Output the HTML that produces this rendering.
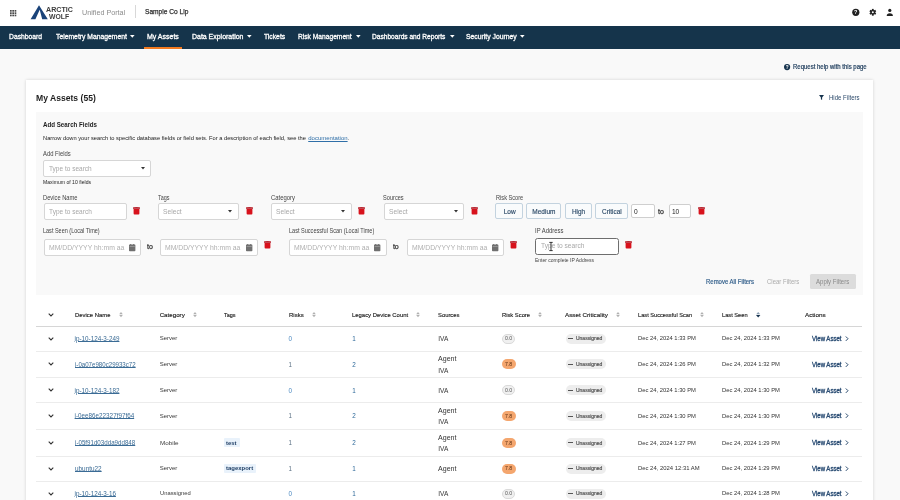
<!DOCTYPE html>
<html><head><meta charset="utf-8"><style>
html,body{margin:0;padding:0;width:900px;height:500px;overflow:hidden;background:#f9f9f9}
body{position:relative;font-family:"Liberation Sans",sans-serif}
span{position:absolute;white-space:pre;line-height:normal;transform-origin:0 0}
svg{overflow:visible}
.wrap{position:absolute;left:0;top:0;width:900px;height:500px;overflow:hidden;filter:blur(0.3px)}
</style></head><body><div class="wrap">
<div style="position:absolute;left:0px;top:0px;width:900px;height:26px;background:#fff"></div>
<div style="position:absolute;left:0px;top:26px;width:900px;height:23px;background:#15344b"></div>
<div style="position:absolute;left:134.6px;top:5.4px;width:1px;height:12.5px;background:#d8d8d8"></div>
<div style="position:absolute;left:144px;top:47px;width:38px;height:2px;background:#f47b20"></div>
<div style="position:absolute;left:26px;top:79.5px;width:847px;height:430px;background:#fff;box-shadow:0 0 3px rgba(0,0,0,0.16)"></div>
<div style="position:absolute;left:36px;top:111.8px;width:826.7px;height:183.2px;background:#f9f9f9"></div>
<div style="position:absolute;left:43px;top:160px;width:108.3px;height:17px;box-sizing:border-box;background:#fff;border:0.8px solid #d6d6d6;border-radius:2px"></div>
<div style="position:absolute;left:43.8px;top:203.3px;width:83.2px;height:16.6px;box-sizing:border-box;background:#fff;border:0.8px solid #d6d6d6;border-radius:2px"></div>
<div style="position:absolute;left:158.2px;top:203.3px;width:81.3px;height:16.6px;box-sizing:border-box;background:#fff;border:0.8px solid #d6d6d6;border-radius:2px"></div>
<div style="position:absolute;left:270.9px;top:203.3px;width:81.3px;height:16.6px;box-sizing:border-box;background:#fff;border:0.8px solid #d6d6d6;border-radius:2px"></div>
<div style="position:absolute;left:383.7px;top:203.3px;width:80.8px;height:16.6px;box-sizing:border-box;background:#fff;border:0.8px solid #d6d6d6;border-radius:2px"></div>
<div style="position:absolute;left:495.4px;top:203.3px;width:27.6px;height:15.3px;box-sizing:border-box;background:#f9fbfc;border:0.9px solid #c3d3df;border-radius:2px"></div>
<div style="position:absolute;left:526.4px;top:203.3px;width:35.1px;height:15.3px;box-sizing:border-box;background:#f9fbfc;border:0.9px solid #c3d3df;border-radius:2px"></div>
<div style="position:absolute;left:564.7px;top:203.3px;width:27.2px;height:15.3px;box-sizing:border-box;background:#f9fbfc;border:0.9px solid #c3d3df;border-radius:2px"></div>
<div style="position:absolute;left:595.3px;top:203.3px;width:32.6px;height:15.3px;box-sizing:border-box;background:#f9fbfc;border:0.9px solid #c3d3df;border-radius:2px"></div>
<div style="position:absolute;left:631px;top:204px;width:24.3px;height:13.6px;box-sizing:border-box;background:#fff;border:0.8px solid #cfcfcf;border-radius:2px"></div>
<div style="position:absolute;left:668.7px;top:204px;width:22.6px;height:13.6px;box-sizing:border-box;background:#fff;border:0.8px solid #cfcfcf;border-radius:2px"></div>
<div style="position:absolute;left:43.8px;top:238.8px;width:97.3px;height:17.1px;box-sizing:border-box;background:#fff;border:0.8px solid #d6d6d6;border-radius:2px"></div>
<div style="position:absolute;left:160.3px;top:238.8px;width:97.9px;height:17.1px;box-sizing:border-box;background:#fff;border:0.8px solid #d6d6d6;border-radius:2px"></div>
<div style="position:absolute;left:289.3px;top:238.8px;width:97.4px;height:17.1px;box-sizing:border-box;background:#fff;border:0.8px solid #d6d6d6;border-radius:2px"></div>
<div style="position:absolute;left:406.7px;top:238.8px;width:97.3px;height:17.1px;box-sizing:border-box;background:#fff;border:0.8px solid #d6d6d6;border-radius:2px"></div>
<div style="position:absolute;left:535px;top:237.5px;width:84px;height:17.0px;box-sizing:border-box;background:#fff;border:1.2px solid #6e6e6e;border-radius:2.5px"></div>
<div style="position:absolute;left:809.6px;top:274px;width:46px;height:15px;background:#dcdcdc;border-radius:1.5px"></div>
<div style="position:absolute;left:36px;top:325.8px;width:826px;height:1px;background:#d6d6d6"></div>
<div style="position:absolute;left:36px;top:350.5px;width:826px;height:1px;background:#ececec"></div>
<div style="position:absolute;left:502.3px;top:333.65px;width:13.2px;height:10px;box-sizing:border-box;background:#f0f0f0;border:0.6px solid #dadada;border-radius:5px"></div>
<div style="position:absolute;left:566px;top:333.65px;width:39.6px;height:10px;background:#ededed;border-radius:5px"></div>
<div style="position:absolute;left:568.2px;top:338.25px;width:5px;height:0.9px;background:#555"></div>
<div style="position:absolute;left:36px;top:377.4px;width:826px;height:1px;background:#ececec"></div>
<div style="position:absolute;left:502px;top:359.45px;width:14px;height:10px;background:#f4a66e;border-radius:5px"></div>
<div style="position:absolute;left:566px;top:359.45px;width:39.6px;height:10px;background:#ededed;border-radius:5px"></div>
<div style="position:absolute;left:568.2px;top:364.05px;width:5px;height:0.9px;background:#555"></div>
<div style="position:absolute;left:36px;top:402.2px;width:826px;height:1px;background:#ececec"></div>
<div style="position:absolute;left:502.3px;top:385.29999999999995px;width:13.2px;height:10px;box-sizing:border-box;background:#f0f0f0;border:0.6px solid #dadada;border-radius:5px"></div>
<div style="position:absolute;left:566px;top:385.29999999999995px;width:39.6px;height:10px;background:#ededed;border-radius:5px"></div>
<div style="position:absolute;left:568.2px;top:389.9px;width:5px;height:0.9px;background:#555"></div>
<div style="position:absolute;left:36px;top:428.8px;width:826px;height:1px;background:#ececec"></div>
<div style="position:absolute;left:502px;top:411.0px;width:14px;height:10px;background:#f4a66e;border-radius:5px"></div>
<div style="position:absolute;left:566px;top:411.0px;width:39.6px;height:10px;background:#ededed;border-radius:5px"></div>
<div style="position:absolute;left:568.2px;top:415.6px;width:5px;height:0.9px;background:#555"></div>
<div style="position:absolute;left:36px;top:455.8px;width:826px;height:1px;background:#ececec"></div>
<div style="position:absolute;left:223.5px;top:438.2px;width:16px;height:9.2px;background:#e9f2fb;border-radius:1px"></div>
<div style="position:absolute;left:502px;top:437.8px;width:14px;height:10px;background:#f4a66e;border-radius:5px"></div>
<div style="position:absolute;left:566px;top:437.8px;width:39.6px;height:10px;background:#ededed;border-radius:5px"></div>
<div style="position:absolute;left:568.2px;top:442.40000000000003px;width:5px;height:0.9px;background:#555"></div>
<div style="position:absolute;left:36px;top:480.5px;width:826px;height:1px;background:#ececec"></div>
<div style="position:absolute;left:223.5px;top:464.04999999999995px;width:32.7px;height:9.2px;background:#e9f2fb;border-radius:1px"></div>
<div style="position:absolute;left:502px;top:463.65px;width:14px;height:10px;background:#f4a66e;border-radius:5px"></div>
<div style="position:absolute;left:566px;top:463.65px;width:39.6px;height:10px;background:#ededed;border-radius:5px"></div>
<div style="position:absolute;left:568.2px;top:468.25px;width:5px;height:0.9px;background:#555"></div>
<div style="position:absolute;left:502.3px;top:488.5px;width:13.2px;height:10px;box-sizing:border-box;background:#f0f0f0;border:0.6px solid #dadada;border-radius:5px"></div>
<div style="position:absolute;left:566px;top:488.5px;width:39.6px;height:10px;background:#ededed;border-radius:5px"></div>
<div style="position:absolute;left:568.2px;top:493.1px;width:5px;height:0.9px;background:#555"></div>
<span style="left:45.57px;top:5px;font-size:7.2px;font-weight:700;color:#3d3d3d;transform:scaleX(0.988);">ARCTIC</span>
<span style="left:49.47px;top:12px;font-size:7.2px;font-weight:700;color:#3d3d3d;transform:scaleX(0.951);">WOLF</span>
<span style="left:82.12px;top:8px;font-size:8px;font-weight:400;color:#8c8c8c;transform:scaleX(0.899);">Unified Portal</span>
<span style="left:144.74px;top:7px;font-size:7.6px;font-weight:400;color:#2b2b2b;transform:scaleX(0.870);-webkit-text-stroke:0.25px #2b2b2b">Sample Co Llp</span>
<span style="left:9.16px;top:32px;font-size:7.3px;font-weight:400;color:#fff;transform:scaleX(0.928);-webkit-text-stroke:0.3px #fff">Dashboard</span>
<span style="left:55.56px;top:32px;font-size:7.3px;font-weight:400;color:#fff;transform:scaleX(0.930);-webkit-text-stroke:0.3px #fff">Telemetry Management</span>
<span style="left:147.16px;top:32px;font-size:7.3px;font-weight:400;color:#fff;transform:scaleX(0.957);-webkit-text-stroke:0.3px #fff">My Assets</span>
<span style="left:191.76px;top:32px;font-size:7.3px;font-weight:400;color:#fff;transform:scaleX(0.953);-webkit-text-stroke:0.3px #fff">Data Exploration</span>
<span style="left:263.56px;top:32px;font-size:7.3px;font-weight:400;color:#fff;transform:scaleX(0.925);-webkit-text-stroke:0.3px #fff">Tickets</span>
<span style="left:298.46px;top:32px;font-size:7.3px;font-weight:400;color:#fff;transform:scaleX(0.912);-webkit-text-stroke:0.3px #fff">Risk Management</span>
<span style="left:372.46px;top:32px;font-size:7.3px;font-weight:400;color:#fff;transform:scaleX(0.905);-webkit-text-stroke:0.3px #fff">Dashboards and Reports</span>
<span style="left:466.26px;top:32px;font-size:7.3px;font-weight:400;color:#fff;transform:scaleX(0.933);-webkit-text-stroke:0.3px #fff">Security Journey</span>
<span style="left:792.62px;top:63px;font-size:6.3px;font-weight:400;color:#1b3a5a;transform:scaleX(0.952);-webkit-text-stroke:0.2px #1b3a5a">Request help with this page</span>
<span style="left:36.38px;top:93px;font-size:8.7px;font-weight:700;color:#1e1e1e;transform:scaleX(0.988);">My Assets (55)</span>
<span style="left:828.91px;top:94px;font-size:6.5px;font-weight:400;color:#2c4a6b;transform:scaleX(0.929);">Hide Filters</span>
<span style="left:43.37px;top:120px;font-size:7.2px;font-weight:700;color:#1e1e1e;transform:scaleX(0.860);">Add Search Fields</span>
<span style="left:42.94px;top:135px;font-size:6.0px;font-weight:400;color:#1a1a1a;transform:scaleX(0.952);">Narrow down your search to specific database fields or field sets. For a description of each field, see the </span>
<span style="left:308.24px;top:135px;font-size:6.0px;font-weight:400;color:#2f6fa8;text-decoration:underline">documentation</span>
<span style="left:347.44px;top:135px;font-size:6.0px;font-weight:400;color:#1a1a1a;">.</span>
<span style="left:42.91px;top:150px;font-size:6.5px;font-weight:400;color:#444;transform:scaleX(0.900);">Add Fields</span>
<span style="left:49.28px;top:165px;font-size:7px;font-weight:400;color:#a8a8a8;transform:scaleX(0.930);">Type to search</span>
<span style="left:42.98px;top:179px;font-size:5.4px;font-weight:400;color:#222;transform:scaleX(0.943);">Maximum of 10 fields</span>
<span style="left:43.41px;top:194px;font-size:6.5px;font-weight:400;color:#444;transform:scaleX(0.886);">Device Name</span>
<span style="left:157.81px;top:194px;font-size:6.5px;font-weight:400;color:#444;transform:scaleX(0.834);">Tags</span>
<span style="left:270.51px;top:194px;font-size:6.5px;font-weight:400;color:#444;transform:scaleX(0.912);">Category</span>
<span style="left:383.31px;top:194px;font-size:6.5px;font-weight:400;color:#444;transform:scaleX(0.865);">Sources</span>
<span style="left:495.51px;top:194px;font-size:6.5px;font-weight:400;color:#444;transform:scaleX(0.867);">Risk Score</span>
<span style="left:49.28px;top:208px;font-size:7px;font-weight:400;color:#a8a8a8;transform:scaleX(0.932);">Type to search</span>
<span style="left:163.38px;top:208px;font-size:7px;font-weight:400;color:#a8a8a8;transform:scaleX(0.955);">Select</span>
<span style="left:276.08px;top:208px;font-size:7px;font-weight:400;color:#a8a8a8;transform:scaleX(0.955);">Select</span>
<span style="left:388.88px;top:208px;font-size:7px;font-weight:400;color:#a8a8a8;transform:scaleX(0.955);">Select</span>
<span style="left:503.71px;top:208px;font-size:6.5px;font-weight:400;color:#2d4b68;-webkit-text-stroke:0.15px #2d4b68">Low</span>
<span style="left:532.31px;top:208px;font-size:6.5px;font-weight:400;color:#2d4b68;-webkit-text-stroke:0.15px #2d4b68">Medium</span>
<span style="left:571.66px;top:208px;font-size:6.5px;font-weight:400;color:#2d4b68;transform:scaleX(0.983);-webkit-text-stroke:0.15px #2d4b68">High</span>
<span style="left:601.71px;top:208px;font-size:6.5px;font-weight:400;color:#2d4b68;transform:scaleX(0.989);-webkit-text-stroke:0.15px #2d4b68">Critical</span>
<span style="left:634.10px;top:208px;font-size:6.6px;font-weight:400;color:#222;">0</span>
<span style="left:658.08px;top:208px;font-size:7px;font-weight:400;color:#333;-webkit-text-stroke:0.25px #333">to</span>
<span style="left:671.90px;top:208px;font-size:6.6px;font-weight:400;color:#222;">10</span>
<span style="left:43.41px;top:227px;font-size:6.5px;font-weight:400;color:#444;transform:scaleX(0.847);">Last Seen (Local Time)</span>
<span style="left:288.91px;top:227px;font-size:6.5px;font-weight:400;color:#444;transform:scaleX(0.855);">Last Successful Scan (Local Time)</span>
<span style="left:534.91px;top:227px;font-size:6.5px;font-weight:400;color:#444;transform:scaleX(0.905);">IP Address</span>
<span style="left:48.70px;top:244px;font-size:6.6px;font-weight:400;color:#b0b0b0;transform:scaleX(1.035);">MM/DD/YYYY hh:mm aa</span>
<span style="left:165.20px;top:244px;font-size:6.6px;font-weight:400;color:#b0b0b0;transform:scaleX(1.035);">MM/DD/YYYY hh:mm aa</span>
<span style="left:294.20px;top:244px;font-size:6.6px;font-weight:400;color:#b0b0b0;transform:scaleX(1.035);">MM/DD/YYYY hh:mm aa</span>
<span style="left:411.60px;top:244px;font-size:6.6px;font-weight:400;color:#b0b0b0;transform:scaleX(1.035);">MM/DD/YYYY hh:mm aa</span>
<span style="left:147.08px;top:243px;font-size:7px;font-weight:400;color:#333;-webkit-text-stroke:0.25px #333">to</span>
<span style="left:392.88px;top:243px;font-size:7px;font-weight:400;color:#333;-webkit-text-stroke:0.25px #333">to</span>
<span style="left:540.89px;top:242px;font-size:6.8px;font-weight:400;color:#a8a8a8;transform:scaleX(0.973);">Type to search</span>
<span style="left:535.00px;top:257px;font-size:5px;font-weight:400;color:#444;">Enter complete IP Address</span>
<span style="left:706.19px;top:278px;font-size:6.8px;font-weight:400;color:#36628d;transform:scaleX(0.878);-webkit-text-stroke:0.2px #36628d">Remove All Filters</span>
<span style="left:767.00px;top:278px;font-size:6.6px;font-weight:400;color:#ababab;transform:scaleX(0.908);">Clear Filters</span>
<span style="left:816.00px;top:278px;font-size:6.6px;font-weight:400;color:#8a8a8a;transform:scaleX(0.917);">Apply Filters</span>
<span style="left:74.83px;top:311px;font-size:6.2px;font-weight:400;color:#222;transform:scaleX(0.959);-webkit-text-stroke:0.15px #222">Device Name</span>
<span style="left:159.63px;top:311px;font-size:6.2px;font-weight:400;color:#222;-webkit-text-stroke:0.15px #222">Category</span>
<span style="left:223.53px;top:311px;font-size:6.2px;font-weight:400;color:#222;transform:scaleX(0.889);-webkit-text-stroke:0.15px #222">Tags</span>
<span style="left:288.63px;top:311px;font-size:6.2px;font-weight:400;color:#222;transform:scaleX(0.967);-webkit-text-stroke:0.15px #222">Risks</span>
<span style="left:352.23px;top:311px;font-size:6.2px;font-weight:400;color:#222;transform:scaleX(0.954);-webkit-text-stroke:0.15px #222">Legacy Device Count</span>
<span style="left:438.33px;top:311px;font-size:6.2px;font-weight:400;color:#222;transform:scaleX(0.943);-webkit-text-stroke:0.15px #222">Sources</span>
<span style="left:501.83px;top:311px;font-size:6.2px;font-weight:400;color:#222;transform:scaleX(0.936);-webkit-text-stroke:0.15px #222">Risk Score</span>
<span style="left:565.43px;top:311px;font-size:6.2px;font-weight:400;color:#222;transform:scaleX(1.015);-webkit-text-stroke:0.15px #222">Asset Criticality</span>
<span style="left:638.33px;top:311px;font-size:6.2px;font-weight:400;color:#222;transform:scaleX(0.915);-webkit-text-stroke:0.15px #222">Last Successful Scan</span>
<span style="left:722.23px;top:311px;font-size:6.2px;font-weight:400;color:#222;transform:scaleX(0.919);-webkit-text-stroke:0.15px #222">Last Seen</span>
<span style="left:804.63px;top:311px;font-size:6.2px;font-weight:400;color:#222;transform:scaleX(1.016);-webkit-text-stroke:0.15px #222">Actions</span>
<span style="left:74.62px;top:335px;font-size:6.3px;font-weight:400;color:#3a6b95;text-decoration:underline;text-decoration-thickness:0.5px;text-underline-offset:0.4px">ip-10-124-3-249</span>
<span style="left:159.64px;top:335px;font-size:6.0px;font-weight:400;color:#3a3a3a;">Server</span>
<span style="left:288.62px;top:335px;font-size:6.3px;font-weight:400;color:#4a88c0;">0</span>
<span style="left:352.22px;top:335px;font-size:6.3px;font-weight:400;color:#2f6a9a;">1</span>
<span style="left:438.31px;top:335px;font-size:6.5px;font-weight:400;color:#333;">IVA</span>
<span style="left:504.89px;top:335px;font-size:5.2px;font-weight:400;color:#555;">0.0</span>
<span style="left:576.28px;top:335px;font-size:5.4px;font-weight:400;color:#555;transform:scaleX(0.925);-webkit-text-stroke:0.2px #555">Unassigned</span>
<span style="left:638.34px;top:335px;font-size:6.0px;font-weight:400;color:#333;transform:scaleX(0.971);">Dec 24, 2024 1:33 PM</span>
<span style="left:722.24px;top:335px;font-size:6.0px;font-weight:400;color:#333;transform:scaleX(0.971);">Dec 24, 2024 1:33 PM</span>
<span style="left:811.70px;top:335px;font-size:6.6px;font-weight:400;color:#254870;transform:scaleX(0.917);-webkit-text-stroke:0.3px #254870">View Asset</span>
<span style="left:74.62px;top:361px;font-size:6.3px;font-weight:400;color:#3a6b95;transform:scaleX(0.973);text-decoration:underline;text-decoration-thickness:0.5px;text-underline-offset:0.4px">i-0a07e980c29933c72</span>
<span style="left:159.64px;top:361px;font-size:6.0px;font-weight:400;color:#3a3a3a;">Server</span>
<span style="left:288.62px;top:361px;font-size:6.3px;font-weight:400;color:#5f7487;">1</span>
<span style="left:352.22px;top:361px;font-size:6.3px;font-weight:400;color:#2f6a9a;">2</span>
<span style="left:438.31px;top:355px;font-size:6.5px;font-weight:400;color:#333;transform:scaleX(1.085);">Agent</span>
<span style="left:438.31px;top:367px;font-size:6.5px;font-weight:400;color:#333;">IVA</span>
<span style="left:504.99px;top:361px;font-size:5.2px;font-weight:400;color:#5a2e10;">7.8</span>
<span style="left:576.28px;top:361px;font-size:5.4px;font-weight:400;color:#555;transform:scaleX(0.925);-webkit-text-stroke:0.2px #555">Unassigned</span>
<span style="left:638.34px;top:361px;font-size:6.0px;font-weight:400;color:#333;transform:scaleX(0.971);">Dec 24, 2024 1:26 PM</span>
<span style="left:722.24px;top:361px;font-size:6.0px;font-weight:400;color:#333;transform:scaleX(0.971);">Dec 24, 2024 1:32 PM</span>
<span style="left:811.70px;top:361px;font-size:6.6px;font-weight:400;color:#254870;transform:scaleX(0.917);-webkit-text-stroke:0.3px #254870">View Asset</span>
<span style="left:74.62px;top:387px;font-size:6.3px;font-weight:400;color:#3a6b95;text-decoration:underline;text-decoration-thickness:0.5px;text-underline-offset:0.4px">ip-10-124-3-182</span>
<span style="left:159.64px;top:387px;font-size:6.0px;font-weight:400;color:#3a3a3a;">Server</span>
<span style="left:288.62px;top:387px;font-size:6.3px;font-weight:400;color:#4a88c0;">0</span>
<span style="left:352.22px;top:387px;font-size:6.3px;font-weight:400;color:#2f6a9a;">1</span>
<span style="left:438.31px;top:387px;font-size:6.5px;font-weight:400;color:#333;">IVA</span>
<span style="left:504.89px;top:387px;font-size:5.2px;font-weight:400;color:#555;">0.0</span>
<span style="left:576.28px;top:387px;font-size:5.4px;font-weight:400;color:#555;transform:scaleX(0.925);-webkit-text-stroke:0.2px #555">Unassigned</span>
<span style="left:638.34px;top:387px;font-size:6.0px;font-weight:400;color:#333;transform:scaleX(0.971);">Dec 24, 2024 1:30 PM</span>
<span style="left:722.24px;top:387px;font-size:6.0px;font-weight:400;color:#333;transform:scaleX(0.971);">Dec 24, 2024 1:30 PM</span>
<span style="left:811.70px;top:387px;font-size:6.6px;font-weight:400;color:#254870;transform:scaleX(0.917);-webkit-text-stroke:0.3px #254870">View Asset</span>
<span style="left:74.62px;top:412px;font-size:6.3px;font-weight:400;color:#3a6b95;text-decoration:underline;text-decoration-thickness:0.5px;text-underline-offset:0.4px">i-0ee86e22327f97f64</span>
<span style="left:159.64px;top:413px;font-size:6.0px;font-weight:400;color:#3a3a3a;">Server</span>
<span style="left:288.62px;top:412px;font-size:6.3px;font-weight:400;color:#5f7487;">1</span>
<span style="left:352.22px;top:412px;font-size:6.3px;font-weight:400;color:#2f6a9a;">2</span>
<span style="left:438.31px;top:407px;font-size:6.5px;font-weight:400;color:#333;transform:scaleX(1.085);">Agent</span>
<span style="left:438.31px;top:418px;font-size:6.5px;font-weight:400;color:#333;">IVA</span>
<span style="left:504.99px;top:413px;font-size:5.2px;font-weight:400;color:#5a2e10;">7.8</span>
<span style="left:576.28px;top:413px;font-size:5.4px;font-weight:400;color:#555;transform:scaleX(0.925);-webkit-text-stroke:0.2px #555">Unassigned</span>
<span style="left:638.34px;top:413px;font-size:6.0px;font-weight:400;color:#333;transform:scaleX(0.971);">Dec 24, 2024 1:30 PM</span>
<span style="left:722.24px;top:413px;font-size:6.0px;font-weight:400;color:#333;transform:scaleX(0.971);">Dec 24, 2024 1:30 PM</span>
<span style="left:811.70px;top:412px;font-size:6.6px;font-weight:400;color:#254870;transform:scaleX(0.917);-webkit-text-stroke:0.3px #254870">View Asset</span>
<span style="left:74.62px;top:439px;font-size:6.3px;font-weight:400;color:#3a6b95;transform:scaleX(0.983);text-decoration:underline;text-decoration-thickness:0.5px;text-underline-offset:0.4px">i-05f91d03dda9dd848</span>
<span style="left:159.64px;top:440px;font-size:6.0px;font-weight:400;color:#3a3a3a;transform:scaleX(1.052);">Mobile</span>
<span style="left:226.26px;top:440px;font-size:5.6px;font-weight:700;color:#1f3f66;transform:scaleX(1.051);">test</span>
<span style="left:288.62px;top:439px;font-size:6.3px;font-weight:400;color:#5f7487;">1</span>
<span style="left:352.22px;top:439px;font-size:6.3px;font-weight:400;color:#2f6a9a;">2</span>
<span style="left:438.31px;top:434px;font-size:6.5px;font-weight:400;color:#333;transform:scaleX(1.085);">Agent</span>
<span style="left:438.31px;top:445px;font-size:6.5px;font-weight:400;color:#333;">IVA</span>
<span style="left:504.99px;top:440px;font-size:5.2px;font-weight:400;color:#5a2e10;">7.8</span>
<span style="left:576.28px;top:440px;font-size:5.4px;font-weight:400;color:#555;transform:scaleX(0.925);-webkit-text-stroke:0.2px #555">Unassigned</span>
<span style="left:638.34px;top:440px;font-size:6.0px;font-weight:400;color:#333;transform:scaleX(0.971);">Dec 24, 2024 1:27 PM</span>
<span style="left:722.24px;top:440px;font-size:6.0px;font-weight:400;color:#333;transform:scaleX(0.971);">Dec 24, 2024 1:29 PM</span>
<span style="left:811.70px;top:439px;font-size:6.6px;font-weight:400;color:#254870;transform:scaleX(0.917);-webkit-text-stroke:0.3px #254870">View Asset</span>
<span style="left:74.62px;top:465px;font-size:6.3px;font-weight:400;color:#3a6b95;transform:scaleX(1.014);text-decoration:underline;text-decoration-thickness:0.5px;text-underline-offset:0.4px">ubuntu22</span>
<span style="left:159.64px;top:465px;font-size:6.0px;font-weight:400;color:#3a3a3a;">Server</span>
<span style="left:226.26px;top:465px;font-size:5.6px;font-weight:700;color:#1f3f66;transform:scaleX(1.065);">tagexport</span>
<span style="left:288.62px;top:465px;font-size:6.3px;font-weight:400;color:#5f7487;">1</span>
<span style="left:352.22px;top:465px;font-size:6.3px;font-weight:400;color:#2f6a9a;">1</span>
<span style="left:438.31px;top:465px;font-size:6.5px;font-weight:400;color:#333;transform:scaleX(1.085);">Agent</span>
<span style="left:504.99px;top:465px;font-size:5.2px;font-weight:400;color:#5a2e10;">7.8</span>
<span style="left:576.28px;top:465px;font-size:5.4px;font-weight:400;color:#555;transform:scaleX(0.925);-webkit-text-stroke:0.2px #555">Unassigned</span>
<span style="left:638.34px;top:465px;font-size:6.0px;font-weight:400;color:#333;transform:scaleX(0.982);">Dec 24, 2024 12:31 AM</span>
<span style="left:722.24px;top:465px;font-size:6.0px;font-weight:400;color:#333;transform:scaleX(0.971);">Dec 24, 2024 1:29 PM</span>
<span style="left:811.70px;top:465px;font-size:6.6px;font-weight:400;color:#254870;transform:scaleX(0.917);-webkit-text-stroke:0.3px #254870">View Asset</span>
<span style="left:74.62px;top:490px;font-size:6.3px;font-weight:400;color:#3a6b95;text-decoration:underline;text-decoration-thickness:0.5px;text-underline-offset:0.4px">ip-10-124-3-16</span>
<span style="left:159.64px;top:490px;font-size:6.0px;font-weight:400;color:#3a3a3a;transform:scaleX(0.966);">Unassigned</span>
<span style="left:288.62px;top:490px;font-size:6.3px;font-weight:400;color:#4a88c0;">0</span>
<span style="left:352.22px;top:490px;font-size:6.3px;font-weight:400;color:#2f6a9a;">1</span>
<span style="left:438.31px;top:490px;font-size:6.5px;font-weight:400;color:#333;">IVA</span>
<span style="left:504.89px;top:490px;font-size:5.2px;font-weight:400;color:#555;">0.0</span>
<span style="left:576.28px;top:490px;font-size:5.4px;font-weight:400;color:#555;transform:scaleX(0.925);-webkit-text-stroke:0.2px #555">Unassigned</span>
<span style="left:722.24px;top:490px;font-size:6.0px;font-weight:400;color:#333;transform:scaleX(0.971);">Dec 24, 2024 1:28 PM</span>
<span style="left:811.70px;top:490px;font-size:6.6px;font-weight:400;color:#254870;transform:scaleX(0.917);-webkit-text-stroke:0.3px #254870">View Asset</span>
<svg style="position:absolute;left:10px;top:9.5px" width="6.4" height="6.4" viewBox="0 0 6.4 6.4"><rect x="0.0" y="0.0" width="1.7" height="1.7" fill="#4a4a4a"/><rect x="0.0" y="2.3" width="1.7" height="1.7" fill="#4a4a4a"/><rect x="0.0" y="4.6" width="1.7" height="1.7" fill="#4a4a4a"/><rect x="2.3" y="0.0" width="1.7" height="1.7" fill="#4a4a4a"/><rect x="2.3" y="2.3" width="1.7" height="1.7" fill="#4a4a4a"/><rect x="2.3" y="4.6" width="1.7" height="1.7" fill="#4a4a4a"/><rect x="4.6" y="0.0" width="1.7" height="1.7" fill="#4a4a4a"/><rect x="4.6" y="2.3" width="1.7" height="1.7" fill="#4a4a4a"/><rect x="4.6" y="4.6" width="1.7" height="1.7" fill="#4a4a4a"/></svg>
<svg style="position:absolute;left:0;top:0" width="60" height="26" viewBox="0 0 60 26">
<path d="M30.6 19.3 L39 5.2 L47.8 19.3 L42.2 19.3 L39.7 9.8 L35.4 19.3 Z" fill="#1a4379"/>
</svg>
<svg style="position:absolute;left:850px;top:6px" width="46" height="13" viewBox="0 0 46 13">
<circle cx="5.8" cy="6.3" r="3.6" fill="#222"/>
<text x="5.8" y="8.4" font-family="Liberation Sans" font-size="5.5" font-weight="700" fill="#fff" text-anchor="middle">?</text>
<g transform="translate(22.8,6.3)" fill="#222">
<circle r="2.4"/>
<g><rect x="-0.9" y="-3.4" width="1.8" height="6.8"/><rect x="-0.9" y="-3.4" width="1.8" height="6.8" transform="rotate(60)"/><rect x="-0.9" y="-3.4" width="1.8" height="6.8" transform="rotate(120)"/></g>
<circle r="1" fill="#fff"/>
</g>
<circle cx="39.8" cy="4.4" r="1.6" fill="#222"/>
<path d="M36.7 10 Q36.7 7.2 39.8 7.2 Q42.9 7.2 42.9 10 Z" fill="#222"/>
</svg>
<svg style="position:absolute;left:129.8px;top:35.4px" width="4.6" height="3" viewBox="0 0 4.6 3"><path d="M0 0 H4.6 L2.3 2.8 Z" fill="#fff"/></svg>
<svg style="position:absolute;left:246.7px;top:35.4px" width="4.6" height="3" viewBox="0 0 4.6 3"><path d="M0 0 H4.6 L2.3 2.8 Z" fill="#fff"/></svg>
<svg style="position:absolute;left:355.6px;top:35.4px" width="4.6" height="3" viewBox="0 0 4.6 3"><path d="M0 0 H4.6 L2.3 2.8 Z" fill="#fff"/></svg>
<svg style="position:absolute;left:449.6px;top:35.4px" width="4.6" height="3" viewBox="0 0 4.6 3"><path d="M0 0 H4.6 L2.3 2.8 Z" fill="#fff"/></svg>
<svg style="position:absolute;left:520.4px;top:35.4px" width="4.6" height="3" viewBox="0 0 4.6 3"><path d="M0 0 H4.6 L2.3 2.8 Z" fill="#fff"/></svg>
<svg style="position:absolute;left:783.5px;top:63.6px" width="6.2" height="6.2" viewBox="0 0 6 6"><circle cx="3" cy="3" r="3" fill="#17344e"/><text x="3" y="4.6" font-family="Liberation Sans" font-size="4.5" font-weight="700" fill="#fff" text-anchor="middle">?</text></svg>
<svg style="position:absolute;left:818.9px;top:95.3px" width="5" height="5" viewBox="0 0 5 5"><path d="M0 0 H5 L3.1 2.6 V5 L1.9 4.3 V2.6 Z" fill="#17344e"/></svg>
<svg style="position:absolute;left:141.3px;top:167.4px" width="4" height="2.4" viewBox="0 0 4 2.4"><path d="M0 0 H4 L2 2.4 Z" fill="#333"/></svg>
<svg style="position:absolute;left:133.2px;top:207px" width="7" height="7.6" viewBox="0 0 7 7.6"><path d="M0 0.9 Q0 0.3 0.6 0.3 H6.4 Q7 0.3 7 0.9 V1.7 H0 Z" fill="#b00d18"/><path d="M2.4 0 H4.6 V0.5 H2.4Z" fill="#b00d18"/><path d="M0.6 1.9 H6.4 V6.6 Q6.4 7.5 5.5 7.5 H1.5 Q0.6 7.5 0.6 6.6 Z" fill="#d8121c"/></svg>
<svg style="position:absolute;left:228.3px;top:210.2px" width="4" height="2.4" viewBox="0 0 4 2.4"><path d="M0 0 H4 L2 2.4 Z" fill="#333"/></svg>
<svg style="position:absolute;left:245.6px;top:207px" width="7" height="7.6" viewBox="0 0 7 7.6"><path d="M0 0.9 Q0 0.3 0.6 0.3 H6.4 Q7 0.3 7 0.9 V1.7 H0 Z" fill="#b00d18"/><path d="M2.4 0 H4.6 V0.5 H2.4Z" fill="#b00d18"/><path d="M0.6 1.9 H6.4 V6.6 Q6.4 7.5 5.5 7.5 H1.5 Q0.6 7.5 0.6 6.6 Z" fill="#d8121c"/></svg>
<svg style="position:absolute;left:341px;top:210.2px" width="4" height="2.4" viewBox="0 0 4 2.4"><path d="M0 0 H4 L2 2.4 Z" fill="#333"/></svg>
<svg style="position:absolute;left:358.2px;top:207px" width="7" height="7.6" viewBox="0 0 7 7.6"><path d="M0 0.9 Q0 0.3 0.6 0.3 H6.4 Q7 0.3 7 0.9 V1.7 H0 Z" fill="#b00d18"/><path d="M2.4 0 H4.6 V0.5 H2.4Z" fill="#b00d18"/><path d="M0.6 1.9 H6.4 V6.6 Q6.4 7.5 5.5 7.5 H1.5 Q0.6 7.5 0.6 6.6 Z" fill="#d8121c"/></svg>
<svg style="position:absolute;left:453.5px;top:210.2px" width="4" height="2.4" viewBox="0 0 4 2.4"><path d="M0 0 H4 L2 2.4 Z" fill="#333"/></svg>
<svg style="position:absolute;left:470.7px;top:207px" width="7" height="7.6" viewBox="0 0 7 7.6"><path d="M0 0.9 Q0 0.3 0.6 0.3 H6.4 Q7 0.3 7 0.9 V1.7 H0 Z" fill="#b00d18"/><path d="M2.4 0 H4.6 V0.5 H2.4Z" fill="#b00d18"/><path d="M0.6 1.9 H6.4 V6.6 Q6.4 7.5 5.5 7.5 H1.5 Q0.6 7.5 0.6 6.6 Z" fill="#d8121c"/></svg>
<svg style="position:absolute;left:698.2px;top:207px" width="7" height="7.6" viewBox="0 0 7 7.6"><path d="M0 0.9 Q0 0.3 0.6 0.3 H6.4 Q7 0.3 7 0.9 V1.7 H0 Z" fill="#b00d18"/><path d="M2.4 0 H4.6 V0.5 H2.4Z" fill="#b00d18"/><path d="M0.6 1.9 H6.4 V6.6 Q6.4 7.5 5.5 7.5 H1.5 Q0.6 7.5 0.6 6.6 Z" fill="#d8121c"/></svg>
<svg style="position:absolute;left:128.9px;top:243.70000000000002px" width="6.4" height="7.2" viewBox="0 0 6.4 7.2"><path d="M0 1.2 Q0 0.6 0.6 0.6 H1.2 V0 H2.2 V0.6 H4.2 V0 H5.2 V0.6 H5.8 Q6.4 0.6 6.4 1.2 V6.4 Q6.4 7.2 5.6 7.2 H0.8 Q0 7.2 0 6.4 Z" fill="#707070"/><rect x="0.6" y="2.2" width="5.2" height="0.5" fill="#fff" opacity="0.5"/></svg>
<svg style="position:absolute;left:245.7px;top:243.70000000000002px" width="6.4" height="7.2" viewBox="0 0 6.4 7.2"><path d="M0 1.2 Q0 0.6 0.6 0.6 H1.2 V0 H2.2 V0.6 H4.2 V0 H5.2 V0.6 H5.8 Q6.4 0.6 6.4 1.2 V6.4 Q6.4 7.2 5.6 7.2 H0.8 Q0 7.2 0 6.4 Z" fill="#707070"/><rect x="0.6" y="2.2" width="5.2" height="0.5" fill="#fff" opacity="0.5"/></svg>
<svg style="position:absolute;left:374.3px;top:243.70000000000002px" width="6.4" height="7.2" viewBox="0 0 6.4 7.2"><path d="M0 1.2 Q0 0.6 0.6 0.6 H1.2 V0 H2.2 V0.6 H4.2 V0 H5.2 V0.6 H5.8 Q6.4 0.6 6.4 1.2 V6.4 Q6.4 7.2 5.6 7.2 H0.8 Q0 7.2 0 6.4 Z" fill="#707070"/><rect x="0.6" y="2.2" width="5.2" height="0.5" fill="#fff" opacity="0.5"/></svg>
<svg style="position:absolute;left:491.5px;top:243.70000000000002px" width="6.4" height="7.2" viewBox="0 0 6.4 7.2"><path d="M0 1.2 Q0 0.6 0.6 0.6 H1.2 V0 H2.2 V0.6 H4.2 V0 H5.2 V0.6 H5.8 Q6.4 0.6 6.4 1.2 V6.4 Q6.4 7.2 5.6 7.2 H0.8 Q0 7.2 0 6.4 Z" fill="#707070"/><rect x="0.6" y="2.2" width="5.2" height="0.5" fill="#fff" opacity="0.5"/></svg>
<svg style="position:absolute;left:264.0px;top:241px" width="7" height="7.6" viewBox="0 0 7 7.6"><path d="M0 0.9 Q0 0.3 0.6 0.3 H6.4 Q7 0.3 7 0.9 V1.7 H0 Z" fill="#b00d18"/><path d="M2.4 0 H4.6 V0.5 H2.4Z" fill="#b00d18"/><path d="M0.6 1.9 H6.4 V6.6 Q6.4 7.5 5.5 7.5 H1.5 Q0.6 7.5 0.6 6.6 Z" fill="#d8121c"/></svg>
<svg style="position:absolute;left:510.4px;top:241px" width="7" height="7.6" viewBox="0 0 7 7.6"><path d="M0 0.9 Q0 0.3 0.6 0.3 H6.4 Q7 0.3 7 0.9 V1.7 H0 Z" fill="#b00d18"/><path d="M2.4 0 H4.6 V0.5 H2.4Z" fill="#b00d18"/><path d="M0.6 1.9 H6.4 V6.6 Q6.4 7.5 5.5 7.5 H1.5 Q0.6 7.5 0.6 6.6 Z" fill="#d8121c"/></svg>
<svg style="position:absolute;left:549.3px;top:241.5px" width="4" height="9" viewBox="0 0 4 9"><path d="M0.3 0.4 H3.7 M0.3 8.6 H3.7 M2 0.4 V8.6" stroke="#222" stroke-width="0.9" fill="none"/></svg>
<svg style="position:absolute;left:625.0px;top:241px" width="7" height="7.6" viewBox="0 0 7 7.6"><path d="M0 0.9 Q0 0.3 0.6 0.3 H6.4 Q7 0.3 7 0.9 V1.7 H0 Z" fill="#b00d18"/><path d="M2.4 0 H4.6 V0.5 H2.4Z" fill="#b00d18"/><path d="M0.6 1.9 H6.4 V6.6 Q6.4 7.5 5.5 7.5 H1.5 Q0.6 7.5 0.6 6.6 Z" fill="#d8121c"/></svg>
<svg style="position:absolute;left:47.8px;top:313px" width="6" height="4" viewBox="0 0 6 4"><path d="M0.7 0.7 L3 2.9 L5.3 0.7" stroke="#333" stroke-width="1.1" fill="none"/></svg>
<svg style="position:absolute;left:118.8px;top:312px" width="4" height="5.4" viewBox="0 0 4 5.4"><path d="M0.2 2.2 L2 0.1 L3.8 2.2 Z" fill="#b0b0b0"/><path d="M0.2 3.0 L2 5.2 L3.8 3.0 Z" fill="#b0b0b0"/></svg>
<svg style="position:absolute;left:193.4px;top:312px" width="4" height="5.4" viewBox="0 0 4 5.4"><path d="M0.2 2.2 L2 0.1 L3.8 2.2 Z" fill="#b0b0b0"/><path d="M0.2 3.0 L2 5.2 L3.8 3.0 Z" fill="#b0b0b0"/></svg>
<svg style="position:absolute;left:311.90000000000003px;top:312px" width="4" height="5.4" viewBox="0 0 4 5.4"><path d="M0.2 2.2 L2 0.1 L3.8 2.2 Z" fill="#b0b0b0"/><path d="M0.2 3.0 L2 5.2 L3.8 3.0 Z" fill="#b0b0b0"/></svg>
<svg style="position:absolute;left:416.3px;top:312px" width="4" height="5.4" viewBox="0 0 4 5.4"><path d="M0.2 2.2 L2 0.1 L3.8 2.2 Z" fill="#b0b0b0"/><path d="M0.2 3.0 L2 5.2 L3.8 3.0 Z" fill="#b0b0b0"/></svg>
<svg style="position:absolute;left:537.8000000000001px;top:312px" width="4" height="5.4" viewBox="0 0 4 5.4"><path d="M0.2 2.2 L2 0.1 L3.8 2.2 Z" fill="#b0b0b0"/><path d="M0.2 3.0 L2 5.2 L3.8 3.0 Z" fill="#b0b0b0"/></svg>
<svg style="position:absolute;left:616.0px;top:312px" width="4" height="5.4" viewBox="0 0 4 5.4"><path d="M0.2 2.2 L2 0.1 L3.8 2.2 Z" fill="#b0b0b0"/><path d="M0.2 3.0 L2 5.2 L3.8 3.0 Z" fill="#b0b0b0"/></svg>
<svg style="position:absolute;left:700.4px;top:312px" width="4" height="5.4" viewBox="0 0 4 5.4"><path d="M0.2 2.2 L2 0.1 L3.8 2.2 Z" fill="#b0b0b0"/><path d="M0.2 3.0 L2 5.2 L3.8 3.0 Z" fill="#b0b0b0"/></svg>
<svg style="position:absolute;left:755.8px;top:312px" width="4.4" height="5.6" viewBox="0 0 4.4 5.6"><path d="M0.2 2.3 L2.2 0 L4.2 2.3 Z" fill="#8da0b3"/><path d="M0 2.9 H4.4 L2.2 5.5 Z" fill="#14304c"/></svg>
<svg style="position:absolute;left:47.8px;top:336.65px" width="6" height="4" viewBox="0 0 6 4"><path d="M0.7 0.7 L3 2.9 L5.3 0.7" stroke="#333" stroke-width="1.1" fill="none"/></svg>
<svg style="position:absolute;left:845.3px;top:336.04999999999995px" width="4" height="5.4" viewBox="0 0 4 5.4"><path d="M0.8 0.5 L3 2.7 L0.8 4.9" stroke="#2a4a6e" stroke-width="1" fill="none"/></svg>
<svg style="position:absolute;left:47.8px;top:362.45px" width="6" height="4" viewBox="0 0 6 4"><path d="M0.7 0.7 L3 2.9 L5.3 0.7" stroke="#333" stroke-width="1.1" fill="none"/></svg>
<svg style="position:absolute;left:845.3px;top:361.84999999999997px" width="4" height="5.4" viewBox="0 0 4 5.4"><path d="M0.8 0.5 L3 2.7 L0.8 4.9" stroke="#2a4a6e" stroke-width="1" fill="none"/></svg>
<svg style="position:absolute;left:47.8px;top:388.29999999999995px" width="6" height="4" viewBox="0 0 6 4"><path d="M0.7 0.7 L3 2.9 L5.3 0.7" stroke="#333" stroke-width="1.1" fill="none"/></svg>
<svg style="position:absolute;left:845.3px;top:387.69999999999993px" width="4" height="5.4" viewBox="0 0 4 5.4"><path d="M0.8 0.5 L3 2.7 L0.8 4.9" stroke="#2a4a6e" stroke-width="1" fill="none"/></svg>
<svg style="position:absolute;left:47.8px;top:414.0px" width="6" height="4" viewBox="0 0 6 4"><path d="M0.7 0.7 L3 2.9 L5.3 0.7" stroke="#333" stroke-width="1.1" fill="none"/></svg>
<svg style="position:absolute;left:845.3px;top:413.4px" width="4" height="5.4" viewBox="0 0 4 5.4"><path d="M0.8 0.5 L3 2.7 L0.8 4.9" stroke="#2a4a6e" stroke-width="1" fill="none"/></svg>
<svg style="position:absolute;left:47.8px;top:440.8px" width="6" height="4" viewBox="0 0 6 4"><path d="M0.7 0.7 L3 2.9 L5.3 0.7" stroke="#333" stroke-width="1.1" fill="none"/></svg>
<svg style="position:absolute;left:845.3px;top:440.2px" width="4" height="5.4" viewBox="0 0 4 5.4"><path d="M0.8 0.5 L3 2.7 L0.8 4.9" stroke="#2a4a6e" stroke-width="1" fill="none"/></svg>
<svg style="position:absolute;left:47.8px;top:466.65px" width="6" height="4" viewBox="0 0 6 4"><path d="M0.7 0.7 L3 2.9 L5.3 0.7" stroke="#333" stroke-width="1.1" fill="none"/></svg>
<svg style="position:absolute;left:845.3px;top:466.04999999999995px" width="4" height="5.4" viewBox="0 0 4 5.4"><path d="M0.8 0.5 L3 2.7 L0.8 4.9" stroke="#2a4a6e" stroke-width="1" fill="none"/></svg>
<svg style="position:absolute;left:47.8px;top:491.5px" width="6" height="4" viewBox="0 0 6 4"><path d="M0.7 0.7 L3 2.9 L5.3 0.7" stroke="#333" stroke-width="1.1" fill="none"/></svg>
<svg style="position:absolute;left:845.3px;top:490.9px" width="4" height="5.4" viewBox="0 0 4 5.4"><path d="M0.8 0.5 L3 2.7 L0.8 4.9" stroke="#2a4a6e" stroke-width="1" fill="none"/></svg>
</div></body></html>
